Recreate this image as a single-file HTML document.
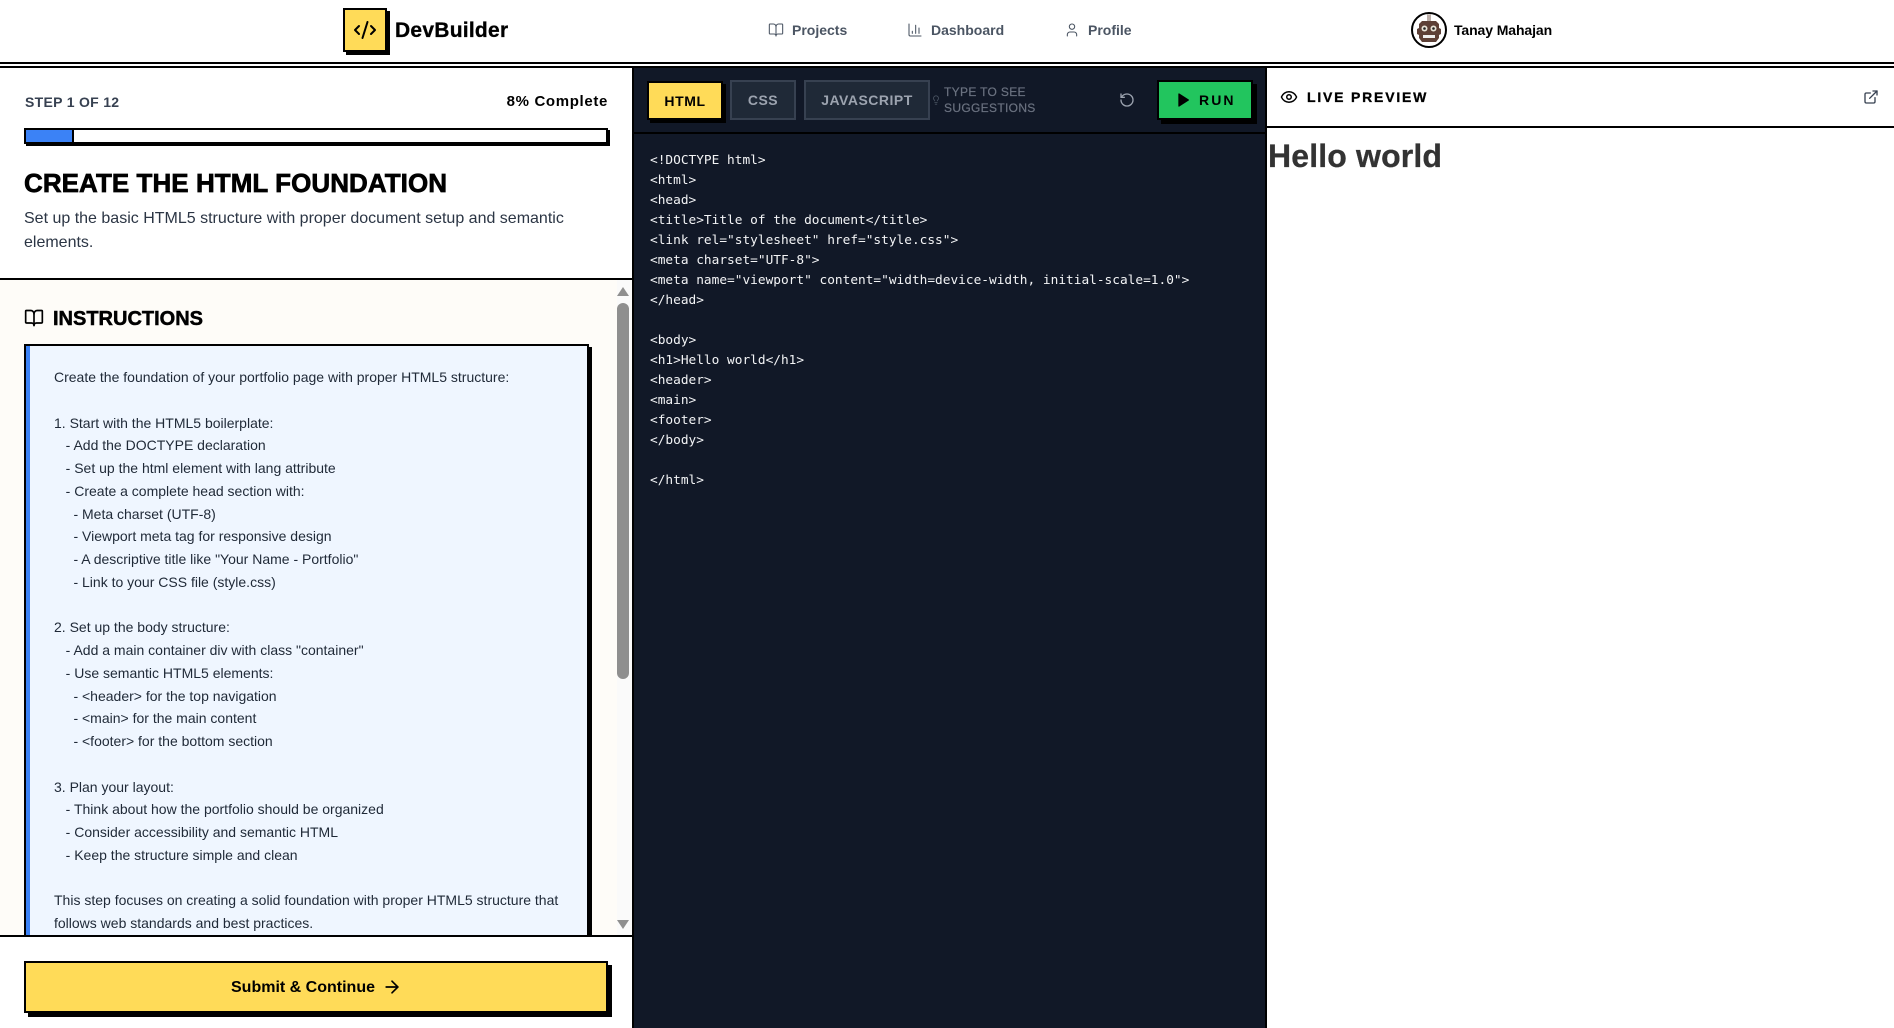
<!DOCTYPE html>
<html lang="en"><head><meta charset="utf-8"><title>DevBuilder</title>
<style>
*{box-sizing:border-box}
html,body{margin:0;padding:0;width:1894px;height:1028px;overflow:hidden;background:#fff;font-family:"Liberation Sans",Arial,sans-serif;color:#000}
.a{position:absolute}
.t{position:absolute;white-space:nowrap}
svg{position:absolute;fill:none;stroke:currentColor;stroke-width:2;stroke-linecap:round;stroke-linejoin:round}
.nav{font-size:14px;font-weight:700;color:#4b5563;line-height:20px;top:20px}
.tab{position:absolute;top:80px;height:40px;background:#1f2937;border:2px solid #374151;color:#9ca3af;font-weight:700;font-size:14px;letter-spacing:.5px;display:flex;align-items:center;justify-content:center}
#code{position:absolute;left:650px;top:151px;margin:0;font:12.8px/20px "DejaVu Sans Mono","Liberation Mono",monospace;color:#f3f4f6;white-space:pre}
#ins{position:absolute;left:54px;top:366px;margin:0;font:14px/22.75px "Liberation Sans",Arial,sans-serif;color:#1f2937;white-space:pre-wrap;width:520px}
</style></head><body>

<!-- header -->
<div class="a" style="left:343px;top:8px;width:44px;height:44px;background:#ffdb58;border:2px solid #000;box-shadow:3px 3px 0 #000"></div>
<svg style="left:353px;top:18px;color:#000" width="24" height="24" viewBox="0 0 24 24"><path d="m18 16 4-4-4-4"/><path d="m6 8-4 4 4 4"/><path d="m14.5 4-5 16"/></svg>
<div class="t" style="left:395px;top:17px;font-size:21px;font-weight:700;line-height:28px;letter-spacing:.25px;-webkit-text-stroke:.3px #000">DevBuilder</div>

<svg style="left:768px;top:22px;color:#4b5563;stroke-width:1.6" width="16" height="16" viewBox="0 0 24 24"><path d="M12 7v14"/><path d="M3 18a1 1 0 0 1-1-1V4a1 1 0 0 1 1-1h5a4 4 0 0 1 4 4 4 4 0 0 1 4-4h5a1 1 0 0 1 1 1v13a1 1 0 0 1-1 1h-6a3 3 0 0 0-3 3 3 3 0 0 0-3-3z"/></svg>
<div class="t nav" style="left:792px">Projects</div>
<svg style="left:907px;top:22px;color:#4b5563;stroke-width:1.6" width="16" height="16" viewBox="0 0 24 24"><path d="M3 3v16a2 2 0 0 0 2 2h16"/><path d="M18 17V9"/><path d="M13 17V5"/><path d="M8 17v-3"/></svg>
<div class="t nav" style="left:931px">Dashboard</div>
<svg style="left:1064px;top:22px;color:#4b5563;stroke-width:1.6" width="16" height="16" viewBox="0 0 24 24"><path d="M19 21v-2a4 4 0 0 0-4-4H9a4 4 0 0 0-4 4v2"/><circle cx="12" cy="7" r="4"/></svg>
<div class="t nav" style="left:1088px">Profile</div>

<svg style="left:1411px;top:12px;stroke:none" width="36" height="36" viewBox="0 0 36 36">
<circle cx="18" cy="18" r="17" fill="#fff" stroke="#000" stroke-width="2"/>
<rect x="16" y="2.5" width="4" height="7" fill="#bcaea8"/>
<path d="M11 9h14l3 3v4l2 1v5l-2 1v3l-3 4H11l-3-4v-3l-2-1v-5l2-1v-4z" fill="#5d4037"/>
<circle cx="13.5" cy="16.5" r="3" fill="#e8e4d8"/><circle cx="22.5" cy="16.5" r="3" fill="#e8e4d8"/>
<circle cx="13.5" cy="16.5" r="1.3" fill="#222"/><circle cx="22.5" cy="16.5" r="1.3" fill="#222"/>
<rect x="12" y="23" width="12" height="3" fill="#eee"/>
</svg>
<div class="t" style="left:1454px;top:20px;font-size:14px;font-weight:700;line-height:20px;letter-spacing:-.1px">Tanay Mahajan</div>

<div class="a" style="left:0;top:62px;width:1894px;height:2px;background:#000"></div>
<div class="a" style="left:0;top:66px;width:1894px;height:2px;background:#000"></div>

<!-- left panel -->
<div class="t" style="left:25px;top:92px;font-size:14px;font-weight:700;line-height:20px;color:#374151;letter-spacing:.3px">STEP 1 OF 12</div>
<div class="t" style="right:1286px;top:92px;font-size:15px;font-weight:700;line-height:20px;letter-spacing:.65px">8% Complete</div>
<div class="a" style="left:24px;top:128px;width:584px;height:16px;border:2px solid #000;box-shadow:2px 2px 0 #000;background:#fff"><div style="width:48px;height:12px;background:#3b82f6;border-right:2px solid #000"></div></div>
<div class="t" style="left:24px;top:167px;font-size:26px;font-weight:700;line-height:32px;color:#000;letter-spacing:.05px;-webkit-text-stroke:.7px #000">CREATE THE HTML FOUNDATION</div>
<div class="a" style="left:24px;top:207px;width:560px;font-size:16px;line-height:24px;color:#2b3544">Set up the basic HTML5 structure with proper document setup and semantic elements.</div>
<div class="a" style="left:0;top:278px;width:632px;height:2px;background:#000"></div>

<div class="a" style="left:0;top:280px;width:632px;height:655px;background:#fefcf8;overflow:hidden">
  <div class="a" style="left:24px;top:64px;width:565px;height:700px;background:#eff6ff;border:2px solid #000;box-shadow:3px 3px 0 #000"><div style="width:4px;height:100%;background:#3b82f6"></div></div>
  <div class="a" style="left:617px;top:0;width:15px;height:655px;background:#fafafa"></div>
  <div class="a" style="left:617px;top:23px;width:12px;height:376px;background:#8f8f8f;border-radius:6px"></div>
  <div class="a" style="left:617px;top:7px;width:0;height:0;border-left:6px solid transparent;border-right:6px solid transparent;border-bottom:9px solid #8f8f8f"></div>
  <div class="a" style="left:617px;top:640px;width:0;height:0;border-left:6px solid transparent;border-right:6px solid transparent;border-top:9px solid #8f8f8f"></div>
</div>
<svg style="left:24px;top:308px;color:#000" width="20" height="20" viewBox="0 0 24 24"><path d="M12 7v14"/><path d="M3 18a1 1 0 0 1-1-1V4a1 1 0 0 1 1-1h5a4 4 0 0 1 4 4 4 4 0 0 1 4-4h5a1 1 0 0 1 1 1v13a1 1 0 0 1-1 1h-6a3 3 0 0 0-3 3 3 3 0 0 0-3-3z"/></svg>
<div class="t" style="left:53px;top:307px;font-size:20px;font-weight:700;line-height:24px;-webkit-text-stroke:.5px #000">INSTRUCTIONS</div>
<div class="a" style="left:0;top:280px;width:617px;height:655px;overflow:hidden">
<pre id="ins" style="top:86px">Create the foundation of your portfolio page with proper HTML5 structure:

1. Start with the HTML5 boilerplate:
   - Add the DOCTYPE declaration
   - Set up the html element with lang attribute
   - Create a complete head section with:
     - Meta charset (UTF-8)
     - Viewport meta tag for responsive design
     - A descriptive title like "Your Name - Portfolio"
     - Link to your CSS file (style.css)

2. Set up the body structure:
   - Add a main container div with class "container"
   - Use semantic HTML5 elements:
     - &lt;header&gt; for the top navigation
     - &lt;main&gt; for the main content
     - &lt;footer&gt; for the bottom section

3. Plan your layout:
   - Think about how the portfolio should be organized
   - Consider accessibility and semantic HTML
   - Keep the structure simple and clean

This step focuses on creating a solid foundation with proper HTML5 structure that
follows web standards and best practices.</pre>
</div>
<div class="a" style="left:0;top:935px;width:632px;height:2px;background:#000"></div>
<div class="a" style="left:24px;top:961px;width:584px;height:52px;background:#ffdb58;border:2px solid #000;box-shadow:4px 4px 0 #000"></div>
<div class="t" style="left:231px;top:977px;font-size:16px;font-weight:700;line-height:22px">Submit &amp; Continue</div>
<svg style="left:382px;top:977px;color:#000" width="20" height="20" viewBox="0 0 24 24"><path d="M5 12h14"/><path d="m12 5 7 7-7 7"/></svg>

<!-- editor -->
<div class="a" style="left:632px;top:68px;width:633px;height:960px;background:#111827"></div>
<div class="a" style="left:632px;top:68px;width:2px;height:960px;background:#000"></div>
<div class="a" style="left:632px;top:132px;width:633px;height:2px;background:#000"></div>
<div class="a" style="left:1265px;top:68px;width:2px;height:960px;background:#000"></div>
<div class="tab" style="left:647px;top:81px;width:76px;height:39px;background:#ffdb58;border-color:#000;color:#000;box-shadow:3px 3px 0 #000;letter-spacing:.6px">HTML</div>
<div class="tab" style="left:730px;width:66px">CSS</div>
<div class="tab" style="left:804px;width:126px">JAVASCRIPT</div>
<svg style="left:931px;top:94px;color:#4b5563;stroke-width:2" width="10" height="12" viewBox="0 0 24 24"><path d="M15 14c.2-1 .7-1.7 1.5-2.5 1-.9 1.5-2.2 1.5-3.5A6 6 0 0 0 6 8c0 1 .2 2.2 1.5 3.5.7.7 1.3 1.5 1.5 2.5"/><path d="M9 18h6"/><path d="M10 22h4"/></svg>
<div class="t" style="left:944px;top:84px;font-size:12px;font-weight:400;line-height:16px;color:#6b7280;letter-spacing:.33px;-webkit-text-stroke:.2px #6b7280">TYPE TO SEE<br>SUGGESTIONS</div>
<svg style="left:1119px;top:92px;color:#9ca3af" width="16" height="16" viewBox="0 0 24 24"><path d="M3 12a9 9 0 1 0 9-9 9.75 9.75 0 0 0-6.74 2.74L3 8"/><path d="M3 3v5h5"/></svg>
<div class="a" style="left:1157px;top:80px;width:96px;height:40px;background:#22c55e;border:2px solid #000;box-shadow:4px 4px 0 #000"></div>
<svg style="left:1175px;top:92px;fill:#000;color:#000" width="16" height="16" viewBox="0 0 24 24"><polygon points="6 3 20 12 6 21 6 3"/></svg>
<div class="t" style="left:1199px;top:90px;font-size:14px;font-weight:700;line-height:20px;letter-spacing:2.1px">RUN</div>
<pre id="code">&lt;!DOCTYPE html&gt;
&lt;html&gt;
&lt;head&gt;
&lt;title&gt;Title of the document&lt;/title&gt;
&lt;link rel="stylesheet" href="style.css"&gt;
&lt;meta charset="UTF-8"&gt;
&lt;meta name="viewport" content="width=device-width, initial-scale=1.0"&gt;
&lt;/head&gt;

&lt;body&gt;
&lt;h1&gt;Hello world&lt;/h1&gt;
&lt;header&gt;
&lt;main&gt;
&lt;footer&gt;
&lt;/body&gt;

&lt;/html&gt;</pre>

<!-- preview -->
<svg style="left:1280px;top:88px;color:#000" width="18" height="18" viewBox="0 0 24 24"><path d="M2.062 12.348a1 1 0 0 1 0-.696 10.75 10.75 0 0 1 19.876 0 1 1 0 0 1 0 .696 10.75 10.75 0 0 1-19.876 0"/><circle cx="12" cy="12" r="3"/></svg>
<div class="t" style="left:1307px;top:87px;font-size:14px;font-weight:700;line-height:20px;letter-spacing:1.8px;-webkit-text-stroke:.3px #000">LIVE PREVIEW</div>
<svg style="left:1863px;top:89px;color:#374151" width="16" height="16" viewBox="0 0 24 24"><path d="M15 3h6v6"/><path d="M10 14 21 3"/><path d="M18 13v6a2 2 0 0 1-2 2H5a2 2 0 0 1-2-2V8a2 2 0 0 1 2-2h6"/></svg>
<div class="a" style="left:1267px;top:126px;width:627px;height:2px;background:#000"></div>
<div class="t" style="left:1268px;top:138px;font-size:32px;font-weight:700;line-height:37px;color:#333;letter-spacing:.15px;-webkit-text-stroke:.3px #333">Hello world</div>
</body></html>
